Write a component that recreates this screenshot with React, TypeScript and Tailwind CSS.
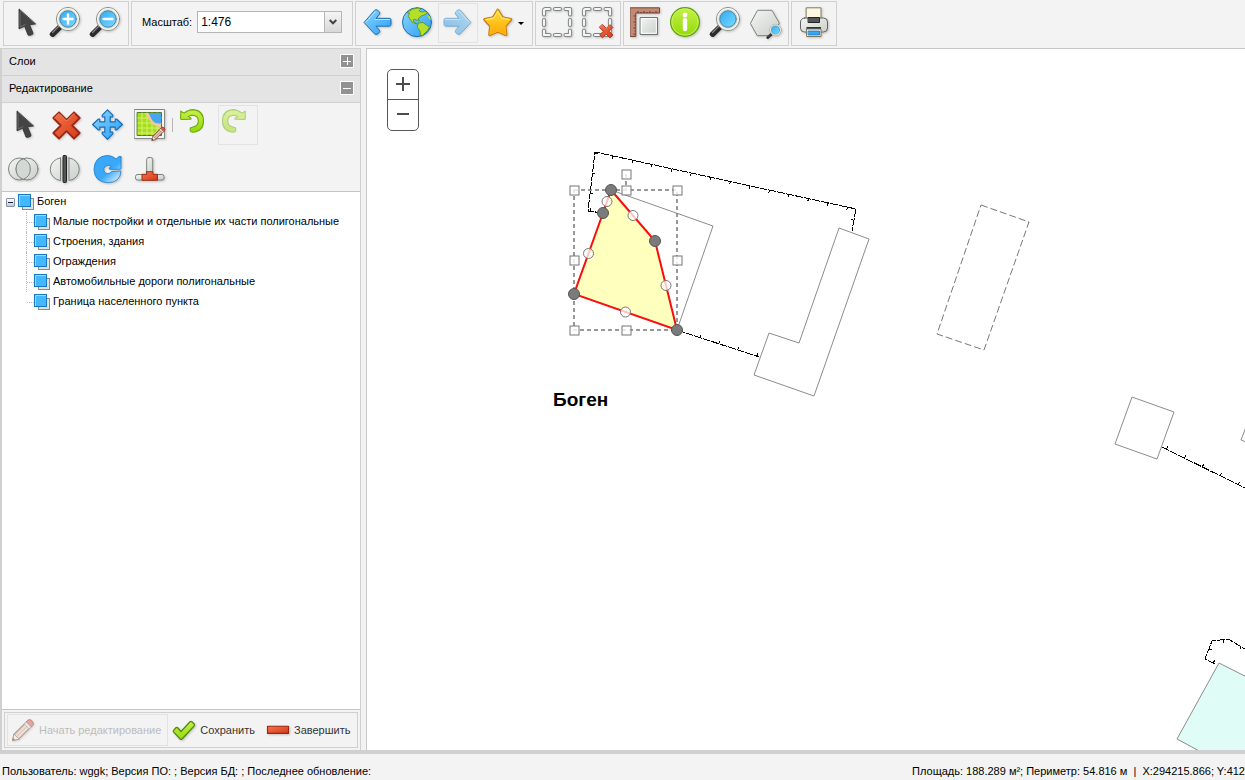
import { ReactNode, useState } from "react";

type Point = [number, number];

interface ToolProps {
    title: string;
    children: ReactNode;
    disabled?: boolean;
    wide?: boolean;
}

const layers = [
    "Малые постройки и отдельные их части полигональные",
    "Строения, здания",
    "Ограждения",
    "Автомобильные дороги полигональные",
    "Граница населенного пункта",
];

const fences: { points: Point[]; side: number; start: number }[] = [
    { points: [[603, 213], [588, 211], [595, 152], [856, 209], [852, 231]], side: 1, start: 13 },
    { points: [[677, 330], [759, 357]], side: -1, start: 24 },
    { points: [[1162, 447], [1245, 488]], side: -1, start: 5 },
    { points: [[1215, 664], [1205, 659], [1212, 641], [1228, 639], [1250, 652]], side: 1, start: 2 },
];

const selected: Point[] = [[611, 190], [655, 241], [677, 330], [574, 294], [603, 213]];
const handles: Point[] = [[574, 190], [626, 190], [677, 190], [574, 260], [677, 260], [574, 330], [626, 330], [626, 174]];

const toPoints = (points: Point[]) => points.map((p) => p.join(",")).join(" ");

// short strokes across the line every 20px
const getTicks = (points: Point[], side: number, start: number) => {
    const ticks: string[] = [];
    let rest = start;
    for (let i = 0; i < points.length - 1; i++) {
        const [x1, y1] = points[i];
        const [x2, y2] = points[i + 1];
        const length = Math.hypot(x2 - x1, y2 - y1);
        const dx = (x2 - x1) / length;
        const dy = (y2 - y1) / length;
        while (rest < length) {
            ticks.push(`M${x1 + dx * rest} ${y1 + dy * rest}l${-dy * 3 * side} ${dx * 3 * side}`);
            rest += 20;
        }
        rest -= length;
    }
    return ticks.join("");
};

const Gradients = () => (
    <svg className="absolute" width="0" height="0" aria-hidden="true">
        <defs>
            <linearGradient id="blue" x1="0" y1="0" x2="1" y2="1">
                <stop offset="0" stopColor="#8ad6ff" />
                <stop offset="1" stopColor="#2a9df4" />
            </linearGradient>
            <linearGradient id="lens" x1="0" y1="0" x2="1" y2="1">
                <stop offset="0" stopColor="#2fa8f8" />
                <stop offset="1" stopColor="#7bdcff" />
            </linearGradient>
            <linearGradient id="red" x1="0" y1="0" x2="1" y2="1">
                <stop offset="0" stopColor="#f6744c" />
                <stop offset="1" stopColor="#d43a18" />
            </linearGradient>
            <linearGradient id="green" x1="0" y1="0" x2="0" y2="1">
                <stop offset="0" stopColor="#c6f04a" />
                <stop offset="1" stopColor="#92da08" />
            </linearGradient>
            <linearGradient id="gray" x1="0" y1="0" x2="1" y2="1">
                <stop offset="0" stopColor="#f4f6f3" />
                <stop offset="1" stopColor="#c9cfc9" />
            </linearGradient>
            <linearGradient id="gold" x1="0" y1="0" x2="0" y2="1">
                <stop offset="0" stopColor="#ffdc3a" />
                <stop offset="1" stopColor="#fca903" />
            </linearGradient>
            <linearGradient id="fade" x1="0" y1="0" x2=".9" y2="1">
                <stop offset=".6" stopColor="#3aa8f8" />
                <stop offset="1" stopColor="#e6f3fc" />
            </linearGradient>
        </defs>
    </svg>
);

const Icon = ({ children, className = "size-8" }: { children: ReactNode; className?: string }) => (
    <svg className={`${className} shrink-0 overflow-visible drop-shadow-[1px_1px_1px_rgba(0,0,0,0.2)]`} viewBox="0 0 32 32" fill="none" strokeLinejoin="round" strokeLinecap="round" aria-hidden="true">
        {children}
    </svg>
);

const PointerIcon = () => (
    <Icon>
        <path d="M9 2.3V21.8L14.6 19.3L18 28L19.5 28.6L22.7 27.3L23 26L19.6 17.8L25.3 17Z" fill="#444" stroke="#2c2c2c" strokeWidth=".8" />
        <path d="M10 5V20L15 17.5" stroke="#777" strokeWidth=".8" />
    </Icon>
);

const Lens = () => (
    <>
        <path d="M10.5 19.5L2.6 27.2" stroke="#2a2a2a" strokeWidth="5.5" />
        <path d="M9 19L2.6 25.5" stroke="#888" strokeWidth="1.2" />
        <circle cx="18" cy="12" r="11.5" fill="#d5dad0" stroke="#858a82" />
        <circle cx="18" cy="12" r="10.3" stroke="#f4f6f0" strokeWidth="1.2" />
        <circle cx="18" cy="12" r="8.2" fill="url(#lens)" stroke="#4d86a8" />
    </>
);

const ZoomInIcon = () => (
    <Icon>
        <Lens />
        <path d="M18 7.5V16.5M13.5 12H22.5" stroke="#fff" strokeWidth="2.4" />
    </Icon>
);

const ZoomOutIcon = () => (
    <Icon>
        <Lens />
        <path d="M13.5 12H22.5" stroke="#fff" strokeWidth="2.4" />
    </Icon>
);

const SearchIcon = () => <Icon><Lens /></Icon>;

const BackShape = () => (
    <>
        <path d="M2.3 15.2L12.5 3.4Q14 2 15.8 3.4L17.5 5Q18.3 6 17.3 7.4L14 11.3H27.2Q29 11.3 29 13V17.4Q29 19.2 27.2 19.2H14L17.4 23.2Q18.3 24.6 17.3 25.6L15.6 27Q14 28.2 12.6 26.9Z" fill="url(#blue)" stroke="#1c6eb4" />
        <path d="M4 15L13.5 4.5M13 12.5H27.5" stroke="#b5e6ff" strokeWidth="1" />
    </>
);

const BackIcon = () => <Icon><BackShape /></Icon>;

const ForwardIcon = () => (
    <Icon>
        <g transform="matrix(-1 0 0 1 31 0)" opacity=".5">
            <BackShape />
        </g>
    </Icon>
);

const GlobeIcon = () => (
    <Icon>
        <circle cx="15" cy="15.2" r="14.5" fill="url(#blue)" stroke="#1f6ea8" />
        <path d="M5.5 5.5Q10 1 16 1L19 2L17 4L20 5L24 4.5L25.5 6L22 8L19 9L16 12L17.5 13.5L14.5 13L12 12L11 14L13 15.5L15 17L10.5 15.5L8 12L6 9L7.5 6.5Z" fill="#b4e02c" stroke="#5c8f14" strokeWidth=".8" />
        <path d="M16.5 16L21 15.5L24.5 18L27.5 20Q26 24 23 26L20.5 28.5L18.5 28L18 24L15.5 20.5Z" fill="#b4e02c" stroke="#5c8f14" strokeWidth=".8" />
        <path d="M25 8L28 9.5L29 13L27 12Z" fill="#b4e02c" />
    </Icon>
);

const starPath = "M15.8 3.2L20.2 10.6L28.8 12.4L23 18.9L23.9 27.6L15.8 24.2L7.7 27.6L8.6 18.9L2.8 12.4L11.4 10.6Z";

const StarIcon = () => (
    <Icon>
        <path d={starPath} stroke="#c47c10" strokeWidth="3" />
        <path d={starPath} fill="url(#gold)" stroke="#fdbf17" strokeWidth="1" />
        <path d="M4 12.7L11.7 11.2L15.8 4.5L19.8 11.2L27.5 12.7" stroke="#fff08a" strokeWidth=".9" />
    </Icon>
);

const frame = "M2 7.5V3.5Q2 2 3.5 2H7.5M13 2H18M23.5 2H28V7.5M2 13V18M28 13V18M2 23.5V28H7.5M13 28H18M23.5 28H28V23.5";

const Cross = () => (
    <>
        <path d="M9 3.3L16.5 10.8L24 3.3L29.7 9L22.2 16.5L29.7 24L24 29.7L16.5 22.2L9 29.7L3.3 24L10.8 16.5L3.3 9Z" fill="url(#red)" stroke="#9c2613" strokeWidth="1.8" />
        <path d="M4.5 9L9 4.5L16.5 12L24 4.5" stroke="#f8906c" strokeWidth="1" />
    </>
);

const SelectIcon = () => (
    <Icon>
        <path d={frame} stroke="#808782" strokeWidth="4.2" />
        <path d={frame} stroke="#f4f6f3" strokeWidth="2.2" />
    </Icon>
);

const UnselectIcon = () => (
    <Icon>
        <path d={frame} stroke="#808782" strokeWidth="4.2" />
        <path d={frame} stroke="#f4f6f3" strokeWidth="2.2" />
        <g transform="translate(16 16) scale(.5)">
            <Cross />
        </g>
    </Icon>
);

const RulerIcon = () => (
    <Icon>
        <path d="M.5 .8H29.5V6H5.8V29.5H.5Z" fill="#c08a74" stroke="#7b4434" />
        <path d="M8 6V4M11 6V5M14 6V4M17 6V5M20 6V4M23 6V5M26 6V4M5.5 9H3.5M5.5 12H4.5M5.5 15H3.5M5.5 18H4.5M5.5 21H3.5M5.5 24H4.5M5.5 27H3.5" stroke="#53271b" strokeWidth=".8" strokeLinecap="butt" />
        <rect x="10.5" y="10.5" width="17" height="17" fill="url(#gray)" stroke="#6d726e" />
        <rect x="11.7" y="11.7" width="14.6" height="14.6" stroke="#fff" />
    </Icon>
);

const InfoIcon = () => (
    <Icon>
        <circle cx="15" cy="15" r="14.4" fill="url(#green)" stroke="#5fa108" strokeWidth="1.2" />
        <circle cx="15" cy="15" r="13.2" stroke="#cdf36d" strokeWidth=".8" />
        <circle cx="15" cy="8" r="2.4" fill="#fff" />
        <path d="M15 13.3V22" stroke="#fff" strokeWidth="4.4" />
    </Icon>
);

const HexagonIcon = () => (
    <Icon>
        <path d="M.6 16L7.5 3.3H22L29.3 16L22 28.6H7.5Z" fill="url(#gray)" stroke="#7e847f" />
        <g transform="translate(16.5 17) scale(.5)">
            <Lens />
        </g>
    </Icon>
);

const PrinterIcon = () => (
    <Icon>
        <path d="M8.5 .8H23V14H8.5Z" fill="#fbf7e4" stroke="#857a5a" />
        <rect x="2.5" y="11" width="27" height="14" rx="4" fill="url(#gray)" stroke="#606562" />
        <rect x="10.5" y="10.5" width="11" height="5" fill="#555" stroke="#222" />
        <rect x="8.5" y="20" width="14.5" height="3" fill="#333" />
        <path d="M9 22H23V29.5H9Z" fill="#fff" stroke="#7d7557" />
        <rect x="10.5" y="24" width="11" height="4" fill="#30aaf6" stroke="#1c6cb0" strokeWidth=".8" />
    </Icon>
);

const DeleteIcon = () => <Icon><Cross /></Icon>;

const MoveIcon = () => (
    <Icon>
        <path d="M15.5 .8L20.8 6.2V7.8H18.2V12.8H23.2V10.2H24.8L30.4 15.5L24.8 20.8H23.2V18.2H18.2V23.2H20.8V24.8L15.5 30.4L10.2 24.8V23.2H12.8V18.2H7.8V20.8H6.2L.6 15.5L6.2 10.2H7.8V12.8H12.8V7.8H10.2V6.2Z" fill="url(#blue)" stroke="#1c6eb4" strokeWidth="1.2" />
    </Icon>
);

const PencilShape = () => (
    <>
        <path d="M2 30L4 21.5L22.5 3Q25.5 1.5 28 4T29.2 9.5L10.5 28Z" fill="#c99682" stroke="#6f4032" strokeWidth="1.4" />
        <path d="M6 24L23 7M8.5 26.5L25.5 9.5" stroke="#f4d7c5" strokeWidth="2" />
        <path d="M20 5.6L22.5 3Q25.5 1.5 28 4T29.2 9.5L26.6 12Z" fill="#e2563c" stroke="#8c2b1d" />
        <path d="M18 7.5L20 5.6L26.6 12L24.6 14Z" fill="#e6e8e8" stroke="#7a7a7a" />
        <path d="M2 30L4 21.5L10.5 28Z" fill="#f7ecdd" stroke="#6f4032" />
        <path d="M2 30L3 26.5L5.5 29Z" fill="#333" />
    </>
);

const EditMapIcon = () => (
    <Icon>
        <rect x=".5" y=".5" width="30" height="29" fill="#f4f5f2" stroke="#858a86" />
        <rect x="3.5" y="3.5" width="24" height="23" fill="#a8dc1e" stroke="#4d7a28" />
        <path d="M4 9H27M4 14H27M4 19H27M4 24H27M8 4V26M13 4V26M18 4V26M23 4V26" stroke="#d3f36a" strokeWidth="1" />
        <path d="M11 4H27V18Q19 18 16 12Q14 8 10 4Z" fill="#f2c99d" />
        <path d="M14.5 4H27V14.5Q19 15 17 9Z" fill="#47a7ee" />
        <g transform="translate(17 17) scale(.47)">
            <PencilShape />
        </g>
    </Icon>
);

const UndoShape = () => (
    <path d="M.8 2.2L4.2 4.2Q8.5 .6 13 .6Q23.5 1.5 23.5 12T12.5 23.2Q10.2 23 10.2 21.5V19.5Q10.2 18.3 12 18.2Q18.3 17.5 18.3 12T12.5 6.2Q10.5 6.2 8.5 7.5L11 9.3Q11.3 10.3 10 10.3L1.5 10.5Q.6 10.3 .6 9.4Z" fill="url(#green)" stroke="#6fa80d" strokeWidth="1.1" />
);

const UndoIcon = () => (
    <svg className="size-6 self-start overflow-visible" viewBox="0 0 24 24" aria-hidden="true">
        <UndoShape />
    </svg>
);

const RedoIcon = () => (
    <svg className="size-6 self-start overflow-visible opacity-50" viewBox="0 0 24 24" aria-hidden="true">
        <g transform="matrix(-1 0 0 1 24 0)">
            <UndoShape />
        </g>
    </svg>
);

const UnionIcon = () => (
    <Icon>
        <circle cx="11.5" cy="16" r="11" fill="url(#gray)" stroke="#7d837f" />
        <circle cx="19" cy="16" r="11" fill="url(#gray)" stroke="#7d837f" />
        <path d="M15.2 5.7A11 11 0 0 1 15.2 26.3A11 11 0 0 1 15.2 5.7Z" fill="#d3d8d4" stroke="#7d837f" />
    </Icon>
);

const SplitIcon = () => (
    <Icon>
        <path d="M10.5 5V27.5A11.3 11.3 0 0 1 10.5 5ZM19 5V27.5A11.3 11.3 0 0 0 19 5Z" fill="url(#gray)" stroke="#7d837f" />
        <rect x="13" y="2.5" width="3.5" height="27" rx="1" fill="#555" stroke="#222" />
    </Icon>
);

const RotateIcon = () => (
    <Icon>
        <path d="M29 4V15.5Q29 16.3 28 16.3H17.6Q16.5 16 17.3 15L19.3 13Q16 11.5 13.5 13.2T12 18T15.5 20.5Q18 20.8 19.5 18.5L29 18Q28.5 29.5 15.5 29.7Q2.5 29 2 16.5Q2.5 3 15.5 2.5Q20.5 2.7 24 6L27 3.5Q28.8 2.8 29 4Z" fill="url(#fade)" stroke="#2583cc" strokeWidth=".9" />
    </Icon>
);

const SnapIcon = () => (
    <Icon>
        <rect x="12.7" y="4.5" width="6" height="16" rx="2" fill="url(#gray)" stroke="#7d837f" />
        <rect x="1.5" y="21.5" width="28.5" height="5.5" rx="2" fill="url(#gray)" stroke="#7d837f" />
        <path d="M12.5 18.7H19V21.3H23.5V27.3H8V21.3H12.5Z" fill="url(#red)" stroke="#9c2f18" />
    </Icon>
);

const PencilIcon = () => <Icon className="size-6 opacity-50"><PencilShape /></Icon>;

const CheckIcon = () => (
    <Icon className="size-6">
        <path d="M2 16.5L5.5 12.7Q6.5 12 7.5 13L12 18L24 5Q25.5 4 26.5 5L29.8 8.3Q30.5 9.5 29.8 10.3L13.5 28Q12 29.3 10.8 28L2 18.5Q1.3 17.5 2 16.5Z" fill="url(#green)" stroke="#4e8810" strokeWidth="1.6" />
    </Icon>
);

const StopIcon = () => (
    <Icon className="size-6">
        <rect x="2" y="11" width="28" height="9.5" fill="url(#red)" stroke="#9c2613" strokeWidth="1.5" />
    </Icon>
);

const LayerIcon = () => (
    <svg className="size-4 shrink-0" viewBox="0 0 16 16" aria-hidden="true">
        <rect x="4.5" y="4.5" width="11" height="11" fill="#dfe2dc" stroke="#8a8d86" />
        <rect x=".5" y=".5" width="12" height="12" fill="#45b8fb" stroke="#1777c2" />
        <path d="M1.5 12V1.5H12" stroke="#8fdcff" fill="none" />
    </svg>
);

const Group = ({ children }: { children: ReactNode }) => (
    <div className="flex shrink-0 items-center border border-[#d0d0d0] px-[2px] pt-px pb-[2px]">{children}</div>
);

const Tool = ({ title, children, disabled = false, wide = false }: ToolProps) => (
    <button
        type="button"
        title={title}
        aria-label={title}
        disabled={disabled}
        className={`flex h-10 shrink-0 items-center border p-[3px] ${wide ? "w-[52px]" : "w-10"} ${disabled ? "border-[#e2e2e2]" : "border-transparent hover:border-[#d0d0d0]"}`}
    >
        {children}
    </button>
);

const PanelHeader = ({ title, open, onToggle }: { title: string; open: boolean; onToggle: () => void }) => (
    <div className="flex h-[27px] shrink-0 items-center justify-between border-b border-[#d0d0d0] bg-[#e4e4e4] pr-[6px] pb-[2px] pl-[7px]">
        <h2>{title}</h2>
        <button type="button" onClick={onToggle} aria-label={title} className="flex size-[14px] items-center justify-center border border-white bg-[#929292]">
            <svg className="size-[10px]" viewBox="0 0 10 10" stroke="#fff" aria-hidden="true">
                <path d={open ? "M1 5.5H9" : "M1 5.5H9M5.5 1V9"} />
            </svg>
        </button>
    </div>
);

const Toolbar = () => (
    <header className="flex shrink-0 gap-[2px] overflow-hidden pt-px pb-[2px] pl-[3px]">
        <Group>
            <Tool title="Выбор"><PointerIcon /></Tool>
            <Tool title="Увеличить"><ZoomInIcon /></Tool>
            <Tool title="Уменьшить"><ZoomOutIcon /></Tool>
        </Group>
        <Group>
            <label htmlFor="scale" className="pr-[5px] pb-[2px] pl-2">Масштаб:</label>
            <div className="relative mr-2 pb-[2px]">
                <select id="scale" className="block h-[22px] w-[145px] appearance-none border border-[#b5b5b5] bg-white pl-[3px] text-[12px]">
                    <option>1:476</option>
                </select>
                <span className="pointer-events-none absolute top-0 right-0 flex h-[22px] w-[18px] items-center justify-center border border-[#b5b5b5] bg-linear-to-b from-[#f5f5f5] to-[#d8d8d8]">
                    <svg className="size-2" viewBox="0 0 8 8" fill="none" stroke="#444" strokeWidth="2" aria-hidden="true">
                        <path d="M.7 2L4 5.3L7.3 2" />
                    </svg>
                </span>
            </div>
        </Group>
        <Group>
            <Tool title="Назад"><BackIcon /></Tool>
            <Tool title="Весь мир"><GlobeIcon /></Tool>
            <Tool title="Вперед" disabled><ForwardIcon /></Tool>
            <Tool title="Закладки" wide>
                <StarIcon />
                <svg className="ml-1 size-[6px] shrink-0" viewBox="0 0 6 6" aria-hidden="true">
                    <path d="M0 2H6L3 5Z" />
                </svg>
            </Tool>
        </Group>
        <Group>
            <Tool title="Выделить"><SelectIcon /></Tool>
            <Tool title="Снять выделение"><UnselectIcon /></Tool>
        </Group>
        <Group>
            <Tool title="Измерения"><RulerIcon /></Tool>
            <Tool title="Информация"><InfoIcon /></Tool>
            <Tool title="Поиск"><SearchIcon /></Tool>
            <Tool title="Поиск по области"><HexagonIcon /></Tool>
        </Group>
        <Group>
            <Tool title="Печать"><PrinterIcon /></Tool>
        </Group>
    </header>
);

const LayerTree = () => {
    const [expanded, setExpanded] = useState(true);

    return (
        <div className="min-h-0 flex-1 overflow-auto bg-white pl-1">
            <div className="flex h-5 items-center">
                <button type="button" onClick={() => setExpanded(!expanded)} aria-label="Боген" className="mr-[3px] flex size-[9px] items-center justify-center rounded-[1px] border border-[#8393ac] bg-linear-to-b from-white to-[#c5cbd6]">
                    <span className="h-px w-[5px] bg-[#222]" />
                </button>
                <LayerIcon />
                <span className="pb-[2px] pl-[3px]">Боген</span>
            </div>
            {expanded ? (
                <ul className="pl-5">
                    {layers.map((layer) => (
                        <li key={layer} className="flex h-5 items-center border-l border-dotted border-[#bbb] last:border-transparent">
                            <span className="w-[7px] border-t border-dotted border-[#bbb]" />
                            <LayerIcon />
                            <span className="pb-[2px] pl-[3px] whitespace-nowrap">{layer}</span>
                        </li>
                    ))}
                </ul>
            ) : null}
        </div>
    );
};

const Sidebar = () => {
    const [open, setOpen] = useState(true);

    return (
        <aside className="flex w-[361px] shrink-0 flex-col border-t border-r border-l-2 border-[#d0d0d0]">
            <PanelHeader title="Слои" open={!open} onToggle={() => setOpen(!open)} />
            <PanelHeader title="Редактирование" open={open} onToggle={() => setOpen(!open)} />
            <div className="flex shrink-0 flex-col gap-1 border-b border-[#c4c4c4] px-[2px] pt-[2px] pb-[2px]">
                <div className="flex items-center gap-[2px]">
                    <Tool title="Выбрать объект"><PointerIcon /></Tool>
                    <Tool title="Удалить"><DeleteIcon /></Tool>
                    <Tool title="Переместить"><MoveIcon /></Tool>
                    <Tool title="Редактировать"><EditMapIcon /></Tool>
                    <span className="mr-px h-[14px] w-px bg-[#b5b5b5]" />
                    <Tool title="Отменить"><UndoIcon /></Tool>
                    <Tool title="Повторить" disabled><RedoIcon /></Tool>
                </div>
                <div className="flex items-center gap-[2px]">
                    <Tool title="Объединить"><UnionIcon /></Tool>
                    <Tool title="Разрезать"><SplitIcon /></Tool>
                    <Tool title="Повернуть"><RotateIcon /></Tool>
                    <Tool title="Прилипание"><SnapIcon /></Tool>
                </div>
            </div>
            <LayerTree />
            <div className="shrink-0 border-t border-[#c4c4c4] p-[2px]">
                <div className="flex h-9 items-center border border-[#d0d0d0] px-[2px] whitespace-nowrap text-[#333]">
                    <button type="button" disabled className="flex h-8 shrink-0 items-center gap-1 border border-[#e2e2e2] pr-[6px] pl-[3px] text-[#bcbcbc]">
                        <PencilIcon />
                        Начать редактирование
                    </button>
                    <button type="button" className="flex h-8 shrink-0 items-center gap-1 px-1">
                        <CheckIcon />
                        Сохранить
                    </button>
                    <button type="button" className="ml-[3px] flex h-8 shrink-0 items-center gap-1 px-1">
                        <StopIcon />
                        Завершить
                    </button>
                </div>
            </div>
        </aside>
    );
};

const MapView = () => (
    <main className="relative min-w-0 flex-1 overflow-hidden border-t border-l border-[#c8c8c8] bg-white">
        <svg className="absolute inset-0 size-full" fill="none" role="img" aria-label="Боген">
            <g transform="translate(-367 -49)">
                <g stroke="#8c8c8c">
                    <path d="M611 190L713 226L677 330" />
                    <path d="M839 228L869 239L814 396L754 375L769 333L799 343Z" />
                    <path d="M1132 397L1174 412L1157 459L1115 444Z" />
                    <path d="M1246 427L1241 440L1246 442" />
                    <path d="M1219 663L1177 739L1203 753H1300V704Z" fill="#dffcf6" />
                    <path d="M981 205L1029 222L984 350L937 334Z" strokeDasharray="7 3" stroke="#777" />
                </g>
                {fences.map((fence, index) => (
                    <g key={index} stroke="#000" shapeRendering="crispEdges">
                        <polyline points={toPoints(fence.points)} strokeDasharray="8 1" />
                        <path d={getTicks(fence.points, fence.side, fence.start)} />
                    </g>
                ))}
                <text x="553" y="406" fill="#000" className="text-[19px] font-bold">Боген</text>

                <g stroke="#777" strokeWidth="1.5" strokeDasharray="4 3">
                    <rect x="574" y="190" width="103" height="140" />
                    <path d="M626 174V190" />
                </g>
                <polygon points={toPoints(selected)} fill="#ffffbe" stroke="#fb0d0d" strokeWidth="2" />
                {handles.map(([x, y]) => (
                    <rect key={`${x}-${y}`} x={x - 4} y={y - 4} width="9" height="9" fill="#fff" fillOpacity=".8" stroke="#777" />
                ))}
                {selected.map(([x, y], index) => {
                    const [nx, ny] = selected[(index + 1) % selected.length];
                    return <circle key={index} cx={(x + nx) / 2} cy={(y + ny) / 2} r="5" fill="#fff" fillOpacity=".75" stroke="#777" />;
                })}
                {selected.map(([x, y]) => (
                    <circle key={`${x}-${y}`} cx={x} cy={y} r="5.5" fill="#7b7b7b" stroke="#555" />
                ))}
            </g>
        </svg>
        <div className="absolute top-5 left-5 flex w-8 flex-col overflow-hidden rounded-[5px] border border-[#57585a] bg-white text-[#4c4c4c]">
            <button type="button" aria-label="Приблизить" className="flex h-[30px] items-center justify-center border-b border-[#57585a]">
                <svg className="size-4" viewBox="0 0 16 16" stroke="currentColor" strokeWidth="2" aria-hidden="true">
                    <path d="M1 7H15M8 0V14" />
                </svg>
            </button>
            <button type="button" aria-label="Отдалить" className="flex h-[30px] items-center justify-center">
                <svg className="size-4" viewBox="0 0 16 16" stroke="currentColor" strokeWidth="2" aria-hidden="true">
                    <path d="M2 7H14" />
                </svg>
            </button>
        </div>
    </main>
);

const App = () => (
    <div className="flex h-screen flex-col overflow-hidden bg-[#f3f3f3] font-['Liberation_Sans',Arial,sans-serif] text-[11px] leading-4 text-black">
        <Gradients />
        <Toolbar />
        <div className="flex min-h-0 flex-1">
            <Sidebar />
            <div className="w-[5px] shrink-0 cursor-col-resize" />
            <MapView />
        </div>
        <footer className="flex h-[30px] shrink-0 items-end justify-between border-t-4 border-[#d0d0d0] pb-px pl-[2px] whitespace-nowrap">
            <span>Пользователь: wggk; Версия ПО: ; Версия БД: ; Последнее обновление:</span>
            <span>Площадь: 188.289 м²; Периметр: 54.816 м &nbsp;|&nbsp; X:294215.866; Y:412</span>
        </footer>
    </div>
);

export default App;
